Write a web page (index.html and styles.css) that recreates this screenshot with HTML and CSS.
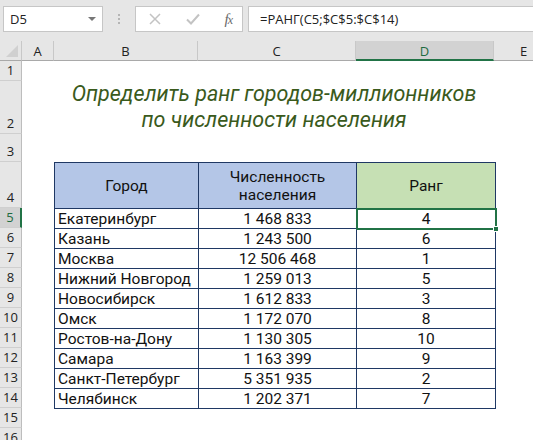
FILE: index.html
```html
<!DOCTYPE html>
<html lang="ru">
<head>
<meta charset="utf-8">
<link rel="stylesheet" href="styles.css">
</head>
<body>
<div class="app">
  <div class="toolbar">
    <div class="namebox">
      <span class="name">D5</span>
      <svg class="dd" width="8" height="5" viewBox="0 0 8 5"><path d="M0 0H8L4 4Z" fill="#777"/></svg>
    </div>
    <div class="grip"><i></i><i></i><i></i></div>
    <div class="btnbox">
      <svg class="btn" width="12" height="12" viewBox="0 0 12 12"><path d="M1 1L11 11M11 1L1 11" stroke="#c3c3c3" stroke-width="1.5" fill="none"/></svg>
      <svg class="btn" width="14" height="12" viewBox="0 0 14 12"><path d="M1 6.5L5 10.5L13 1.5" stroke="#c3c3c3" stroke-width="2" fill="none"/></svg>
      <span class="fx">f<span class="x">x</span></span>
    </div>
    <div class="formula">=РАНГ(C5;$C$5:$C$14)</div>
  </div>
  <div class="sheet">
    <div class="corner"><span class="tri"></span></div>
    <div class="ch">A</div>
    <div class="ch">B</div>
    <div class="ch">C</div>
    <div class="ch sel">D</div>
    <div class="ch last">E</div>

    <div class="rh">1</div>
    <div class="rh r2">2</div>
    <div class="rh r3">3</div>
    <div class="rh r4">4</div>
    <div class="rh sel r5">5</div>
    <div class="rh r6">6</div>
    <div class="rh r7">7</div>
    <div class="rh r8">8</div>
    <div class="rh r9">9</div>
    <div class="rh r10">10</div>
    <div class="rh r11">11</div>
    <div class="rh r12">12</div>
    <div class="rh r13">13</div>
    <div class="rh r14">14</div>
    <div class="rh r15">15</div>
    <div class="rh r16">16</div>

    <div class="title">Определить ранг городов-миллионников<br>по численности населения</div>

    <table class="data">
      <colgroup><col class="cb"><col class="cc"><col class="cd"></colgroup>
      <tr class="head">
        <th class="blue">Город</th>
        <th class="blue">Численность<br>населения</th>
        <th class="green">Ранг</th>
      </tr>
      <tr><td class="city">Екатеринбург</td><td class="num">1 468 833</td><td class="num active">4<span class="handle"></span></td></tr>
      <tr><td class="city">Казань</td><td class="num">1 243 500</td><td class="num">6</td></tr>
      <tr><td class="city">Москва</td><td class="num">12 506 468</td><td class="num">1</td></tr>
      <tr><td class="city">Нижний Новгород</td><td class="num">1 259 013</td><td class="num">5</td></tr>
      <tr><td class="city">Новосибирск</td><td class="num">1 612 833</td><td class="num">3</td></tr>
      <tr><td class="city">Омск</td><td class="num">1 172 070</td><td class="num">8</td></tr>
      <tr><td class="city">Ростов-на-Дону</td><td class="num">1 130 305</td><td class="num">10</td></tr>
      <tr><td class="city">Самара</td><td class="num">1 163 399</td><td class="num">9</td></tr>
      <tr><td class="city">Санкт-Петербург</td><td class="num">5 351 935</td><td class="num">2</td></tr>
      <tr><td class="city">Челябинск</td><td class="num">1 202 371</td><td class="num">7</td></tr>
    </table>
  </div>
</div>
</body>
</html>
```
FILE: styles.css
```css
* { box-sizing: border-box; }
html, body { margin: 0; padding: 0; background: #ffffff; }
body { width: 533px; height: 440px; overflow: hidden; font-family: "Roboto", "Liberation Sans", sans-serif; }

.app { width: 533px; height: 440px; overflow: hidden; }

.toolbar {
  height: 41px;
  background: #e6e6e6;
  display: flex;
  align-items: flex-start;
  padding: 6px 0 0 3px;
  font-family: "Open Sans", "Liberation Sans", sans-serif;
}
.namebox {
  width: 100px; height: 26px;
  background: #fff;
  border: 1px solid #c6c6c6;
  display: flex; align-items: center; justify-content: space-between;
  padding: 0 6px 0 6px;
  font-size: 13px; color: #222;
}
.dd { margin-top: 1px; }
.grip {
  width: 32px; height: 26px;
  display: flex; flex-direction: column; align-items: center; justify-content: center; gap: 2px;
}
.grip i { display: block; width: 2px; height: 2px; background: #b5b5b5; }
.btnbox {
  width: 108px; height: 26px;
  background: #fff;
  border: 1px solid #c6c6c6;
  display: flex; align-items: center; justify-content: space-between;
  padding: 0 10px 0 13px;
}
.fx { font-family: "Liberation Serif", serif; font-style: italic; font-size: 15px; color: #6a6a6a; letter-spacing: -1px; }
.fx .x { font-size: 12px; }
.formula {
  margin-left: 5px;
  flex: 1; height: 26px;
  background: #fff;
  border: 1px solid #c6c6c6;
  border-right: none;
  padding: 0 0 0 11px;
  font-size: 13px; color: #222; line-height: 24px;
}

.sheet {
  display: grid;
  grid-template-columns: 22px 32px 144px 158px 138px 1fr;
  grid-template-rows: 20px 20px 53px 28px 46px repeat(12, 20px);
  font-family: "Open Sans", "Liberation Sans", sans-serif;
}
.corner {
  grid-row: 1; grid-column: 1;
  background: #e6e6e6;
  border-right: 1px solid #c8c8c8;
  border-bottom: 1px solid #a9a9a9;
  position: relative;
}
.tri {
  position: absolute; right: 3px; bottom: 3px;
  width: 0; height: 0;
  border-left: 12px solid transparent;
  border-bottom: 12px solid #d0d0d0;
}
.ch {
  grid-row: 1;
  background: #e6e6e6;
  border-right: 1px solid #c8c8c8;
  border-bottom: 1px solid #a9a9a9;
  font-size: 13px; color: #222;
  display: flex; align-items: center; justify-content: center;
  padding-top: 1px;
}
.ch.sel { background: #d2d2d2; color: #1e6b3f; border-bottom: 2px solid #217346; }
.ch.last { justify-content: flex-start; padding-left: 26px; border-right: none; }

.rh {
  grid-column: 1;
  background: #e6e6e6;
  border-right: 1px solid #bdbdbd;
  border-bottom: 1px solid #cfcfcf;
  font-size: 13px; color: #222;
  display: flex; align-items: flex-end; justify-content: center;
  padding-bottom: 1px;
}
.rh.sel { background: #d2d2d2; color: #1e6b3f; border-right: 2px solid #217346; }

.title {
  grid-column: 3 / 6; grid-row: 3;
  align-self: end;
  text-align: center;
  font-family: "Roboto", sans-serif;
  font-style: italic;
  font-size: 21.5px;
  line-height: 26px;
  color: #3a5a1c;
  padding-bottom: 1px;
}

.data {
  grid-column: 3 / 6; grid-row: 5 / 15;
  border-collapse: collapse;
  width: 441px;
  height: 247px;
  font-family: "Roboto", "Liberation Sans", sans-serif;
  font-size: 15.5px;
  color: #111;
  table-layout: fixed;
}
.cb { width: 144px; }
.cc { width: 158px; }
.cd { width: 139px; }
.data th, .data td { border: 1px solid #1f3864; padding: 0; }
.data th { font-weight: normal; line-height: 18px; height: 46px; }
.data td { height: 20px; line-height: 18px; }
.blue { background: #b4c6e7; }
.green { background: #c6e0b4; }
.city { text-align: left; padding-left: 3px !important; }
.num { text-align: center; }
.active { position: relative; outline: 2px solid #217346; outline-offset: -1px; }
.handle {
  position: absolute; right: -4px; bottom: -4px;
  width: 6px; height: 6px;
  background: #217346; border: 1px solid #fff;
}
```
